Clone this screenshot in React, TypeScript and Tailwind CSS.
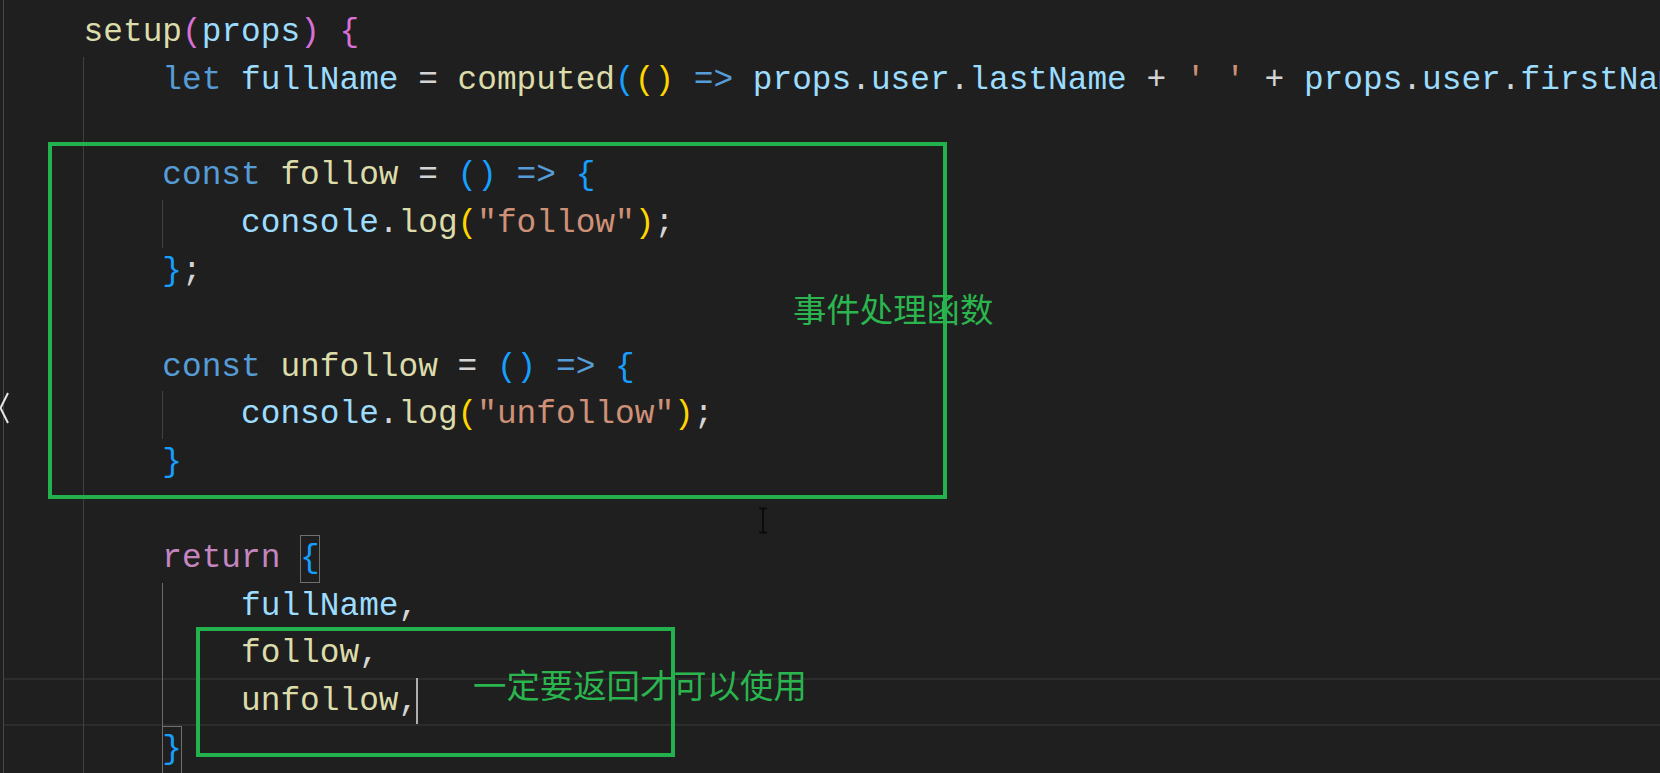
type Tok = [string, string, boolean?]

type Line = {
  toks: Tok[]
  outer?: boolean
  inner?: 'dim' | 'active'
  current?: boolean
  caret?: boolean
}

const kw = 'text-[#569cd6]'
const ctl = 'text-[#c586c0]'
const fn = 'text-[#dcdcaa]'
const vr = 'text-[#9cdcfe]'
const st = 'text-[#ce9178]'
const pu = 'text-[#d4d4d4]'
const b1 = 'text-[#ffd700]'
const b2 = 'text-[#da70d6]'
const b3 = 'text-[#179fff]'

const lines: Line[] = [
  { toks: [['}', b2], [',', pu]] },
  { toks: [['setup', fn], ['(', b2], ['props', vr], [')', b2], [' '], ['{', b2]] as Tok[] },
  {
    outer: true,
    toks: [
      ['    let', kw], [' fullName', vr], [' = ', pu], ['computed', fn], ['(', b3], ['(', b1], [')', b1],
      [' =>', kw], [' props', vr], ['.', pu], ['user', vr], ['.', pu], ['lastName', vr], [' + ', pu],
      ["' '", st], [' + ', pu], ['props', vr], ['.', pu], ['user', vr], ['.', pu], ['firstName', vr],
      [')', b3], [';', pu],
    ],
  },
  { outer: true, toks: [] },
  { outer: true, toks: [['    const', kw], [' follow', fn], [' = ', pu], ['(', b3], [')', b3], [' =>', kw], [' ', pu], ['{', b3]] },
  { outer: true, inner: 'dim', toks: [['        console', vr], ['.', pu], ['log', fn], ['(', b1], ['"follow"', st], [')', b1], [';', pu]] },
  { outer: true, toks: [['    }', b3], [';', pu]] },
  { outer: true, toks: [] },
  { outer: true, toks: [['    const', kw], [' unfollow', fn], [' = ', pu], ['(', b3], [')', b3], [' =>', kw], [' ', pu], ['{', b3]] },
  { outer: true, inner: 'dim', toks: [['        console', vr], ['.', pu], ['log', fn], ['(', b1], ['"unfollow"', st], [')', b1], [';', pu]] },
  { outer: true, toks: [['    }', b3]] },
  { outer: true, toks: [] },
  { outer: true, toks: [['    return', ctl], [' ', pu], ['{', b3, true]] },
  { outer: true, inner: 'active', toks: [['        fullName', vr], [',', pu]] },
  { outer: true, inner: 'active', toks: [['        follow', fn], [',', pu]] },
  { outer: true, inner: 'active', current: true, caret: true, toks: [['        unfollow', fn], [',', pu]] },
  { outer: true, toks: [['    ', pu], ['}', b3, true]] },
  { outer: true, toks: [['}', b2], [',', pu]] },
]

function CodeLine({ line }: { line: Line }) {
  return (
    <div
      className={`relative h-[47.8px] shrink-0 whitespace-pre pl-[79.6px] leading-[47.8px] ${
        line.current ? 'shadow-[inset_0_2px_0_#2c2c2c,inset_0_-2px_0_#2c2c2c]' : ''
      }`}
    >
      {line.outer && <span className="absolute left-[79px] top-0 h-full w-px bg-[#404040]" />}
      {line.inner && (
        <span
          className={`absolute left-[158px] top-0 h-full w-px ${
            line.inner === 'active' ? 'bg-[#6a6a6a]' : 'bg-[#404040]'
          }`}
        />
      )}
      {line.toks.map(([t, c, box], i) =>
        box ? (
          <span key={i} className={`inline-block h-[47.8px] align-top shadow-[inset_0_0_0_1px_#6f6f6f] ${c}`}>
            {t}
          </span>
        ) : (
          <span key={i} className={c ?? pu}>
            {t}
          </span>
        ),
      )}
      {line.caret && <span className="ml-[-2px] inline-block h-[46px] w-[2px] bg-[#aeafad] align-top" />}
    </div>
  )
}

export default function App() {
  return (
    <div className="relative flex h-[773px] w-[1660px] overflow-hidden bg-[#1f1f1f]">
      <div className="w-[4px] shrink-0 border-r border-[#474747]" />

      <div className="flex min-w-0 flex-1 flex-col overflow-hidden pt-0 font-['Liberation_Mono',monospace] text-[32.8px]">
        <div className="mt-[-38.8px] flex flex-col">
          {lines.map((line, i) => (
            <CodeLine key={i} line={line} />
          ))}
        </div>
      </div>

      {/* collapse arrow at the left edge */}
      <svg className="absolute left-0 top-[391px]" width="10" height="34" viewBox="0 0 10 34" fill="none">
        <path d="M8 2 L0.5 17 L8 32" stroke="#e6e6e6" strokeWidth="2" />
      </svg>

      {/* annotation boxes */}
      <div className="absolute left-[48px] top-[142px] h-[357px] w-[899px] border-4 border-[#22b14c]" />
      <div className="absolute left-[196px] top-[627px] h-[130px] w-[479px] border-4 border-[#22b14c]" />

      <div className="absolute left-[793px] top-[291px] font-['Noto_Sans_CJK_SC',sans-serif] text-[33.4px] leading-none text-[#2ab54e]">
        事件处理函数
      </div>
      <div className="absolute left-[473px] top-[667px] font-['Noto_Sans_CJK_SC',sans-serif] text-[33.4px] leading-none text-[#2ab54e]">
        一定要返回才可以使用
      </div>

      {/* mouse I-beam */}
      <svg className="absolute left-[757px] top-[507px]" width="12" height="27" viewBox="0 0 12 27" fill="none">
        <path d="M2 1.5 H10 M6 1.5 V25.5 M2 25.5 H10" stroke="#0b0b0b" strokeWidth="2" />
      </svg>
    </div>
  )
}
